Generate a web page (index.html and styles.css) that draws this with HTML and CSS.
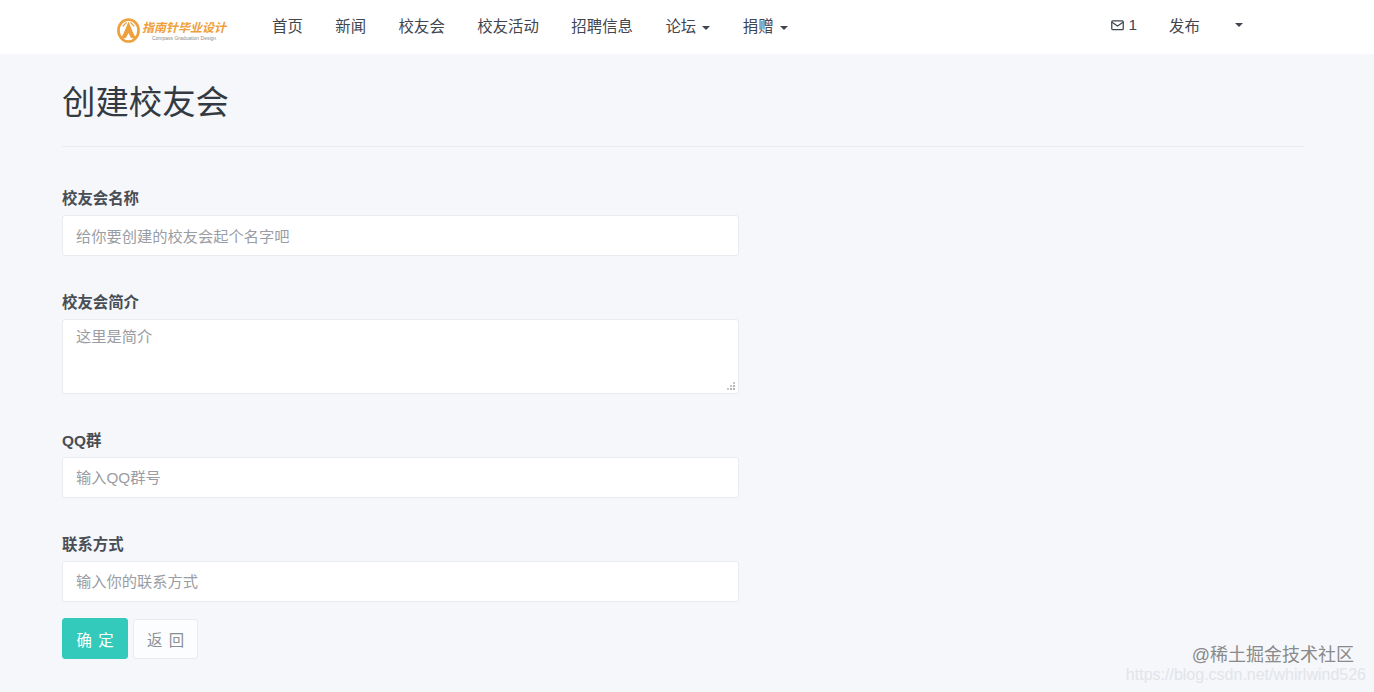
FILE: index.html
```html
<!DOCTYPE html>
<html lang="zh-CN">
<head>
    <meta charset="UTF-8">
    <meta name="viewport" content="width=device-width, initial-scale=1.0">
    <title>创建校友会</title>
    <link rel="stylesheet" href="styles.css">
</head>
<body>
    <div class="navbar">
        <a class="logo" href="#">
            <svg class="logo-mark" viewBox="0 0 24 27" width="23" height="27">
                <ellipse cx="12" cy="13.5" rx="10.5" ry="11.5" fill="none" stroke="#eea03c" stroke-width="2.8"/>
                <path d="M12 4 L16 14 L20 22 L14.5 21 L12 16 L9.5 21 L4 22 L8 14 Z" fill="#eea03c"/>
                <path d="M6 9 L10 5 M18 9 L14 5" fill="none" stroke="#eea03c" stroke-width="1.4"/>
            </svg>
            <span class="logo-text">
                <span class="logo-name">指南针毕业设计</span>
                <span class="logo-sub">Compass Graduation Design</span>
            </span>
        </a>
        <ul class="nav">
            <li><a href="#">首页</a></li>
            <li><a href="#">新闻</a></li>
            <li><a href="#">校友会</a></li>
            <li><a href="#">校友活动</a></li>
            <li><a href="#">招聘信息</a></li>
            <li><a href="#">论坛<span class="caret"></span></a></li>
            <li><a href="#">捐赠<span class="caret"></span></a></li>
        </ul>
        <div class="nav-right">
            <a class="msg" href="#">
                <svg viewBox="0 0 14 12" width="13" height="11">
                    <rect x="0.75" y="1" width="12.5" height="9.5" rx="1" fill="none" stroke="#3f4650" stroke-width="1.4"/>
                    <path d="M1 2.5 L7 6.5 L13 2.5" fill="none" stroke="#3f4650" stroke-width="1.3"/>
                </svg>
                1
            </a>
            <a class="publish" href="#">发布</a>
            <span class="caret user-caret"></span>
        </div>
    </div>

    <div class="container">
        <h1 class="page-title">创建校友会</h1>

        <form class="form">
            <div class="form-group">
                <label>校友会名称</label>
                <input class="form-control" type="text" placeholder="给你要创建的校友会起个名字吧">
            </div>
            <div class="form-group">
                <label>校友会简介</label>
                <div class="area-wrap">
                    <textarea class="form-control text-area" placeholder="这里是简介"></textarea>
                </div>
            </div>
            <div class="form-group">
                <label>QQ群</label>
                <input class="form-control" type="text" placeholder="输入QQ群号">
            </div>
            <div class="form-group last">
                <label>联系方式</label>
                <input class="form-control" type="text" placeholder="输入你的联系方式">
            </div>
            <div class="actions">
                <button class="btn btn-primary" type="button">确 定</button>
                <button class="btn btn-default" type="button">返 回</button>
            </div>
        </form>
    </div>

    <div class="watermark">
        <div class="wm-juejin">@稀土掘金技术社区</div>
        <div class="wm-csdn">https://blog.csdn.net/whirlwind526</div>
    </div>
</body>
</html>
```

FILE: styles.css
```css
* {
    box-sizing: border-box;
}

html, body {
    height: 100%;
}

body {
    margin: 0;
    background-color: #f5f7fb;
    color: #3f4650;
    font-family: "Liberation Sans", "Noto Sans CJK SC", sans-serif;
    font-size: 15.4px;
    overflow: hidden;
}

a {
    color: inherit;
    text-decoration: none;
}

/* navbar */
.navbar {
    display: flex;
    align-items: center;
    height: 54px;
    padding-left: 117px;
    background-color: #fff;
}

.logo {
    display: flex;
    align-items: center;
    gap: 2px;
    width: 155px;
    padding-top: 7px;
}

.logo-text {
    display: flex;
    flex-direction: column;
    align-items: center;
}

.logo-name {
    color: #eea03c;
    font-size: 12px;
    line-height: 14px;
    font-weight: 700;
    font-style: italic;
}

.logo-sub {
    color: #8d8d8d;
    font-size: 5px;
    line-height: 6px;
}

.nav {
    display: flex;
    gap: 32.5px;
    margin: 0 0 4px;
    padding: 0;
    list-style: none;
}

.caret {
    display: inline-block;
    margin-left: 6px;
    vertical-align: middle;
    border-top: 4px solid #3f4650;
    border-left: 4px solid transparent;
    border-right: 4px solid transparent;
}

.nav-right {
    display: flex;
    align-items: center;
    margin: 0 0 4px 323px;
}

.msg {
    display: flex;
    align-items: center;
    gap: 5px;
}

.publish {
    margin-left: 32px;
}

.user-caret {
    margin-left: 35px;
}

/* content */
.container {
    padding: 0 70px 0 62px;
}

.page-title {
    margin: 0;
    height: 93px;
    padding-top: 25px;
    border-bottom: 1px solid #e9ecf1;
    font-size: 33.4px;
    line-height: 48px;
    font-weight: 400;
    color: #343a42;
}

.form {
    width: 677px;
    padding-top: 44px;
}

.form-group {
    margin-bottom: 39px;
}

.form-group.last {
    margin-bottom: 16px;
}

.form-group label {
    display: block;
    height: 16px;
    margin-bottom: 8px;
    line-height: 16px;
    font-weight: 700;
    color: #494e55;
}

.form-control {
    display: block;
    width: 100%;
    height: 41px;
    padding: 0 13px;
    background-color: #fff;
    border: 1px solid #e8ebf0;
    border-radius: 3px;
    outline: none;
    color: #3f4650;
    font-family: inherit;
    font-size: 15.25px;
}

.form-group:first-child .form-control {
    padding-top: 1px;
}

.form-control::placeholder {
    color: #9a9da3;
    opacity: 1;
}

.area-wrap {
    position: relative;
}

.text-area {
    height: 75px;
    padding: 7px 13px;
    line-height: 20px;
    resize: none;
}

/* dotted resize grip, lower right corner of the textarea */
.area-wrap::after {
    content: "";
    position: absolute;
    right: 4px;
    bottom: 4px;
    width: 2px;
    height: 2px;
    background-color: #b4b4b4;
    box-shadow: -3px 0 #b4b4b4, -6px 0 #c8c8c8, 0 -3px #b4b4b4, -3px -3px #c8c8c8, 0 -6px #c8c8c8;
}

.actions {
    display: flex;
    align-items: center;
    gap: 5px;
}

.btn {
    border-radius: 3px;
    font-family: inherit;
    font-size: 15.4px;
    word-spacing: 2px;
}

.btn-primary {
    width: 66px;
    height: 41px;
    background-color: #33cabb;
    border: 1px solid #33cabb;
    color: #fff;
}

.btn-default {
    width: 65px;
    height: 40px;
    background-color: #fcfdfe;
    border: 1px solid #e8ebf0;
    color: #8b9096;
}

/* watermark over the corner of the screenshot */
.watermark {
    position: absolute;
    right: 8px;
    bottom: 8px;
    text-align: right;
}

.wm-juejin {
    margin-right: 12px;
    color: #8a8a8a;
    font-size: 18px;
    line-height: 22px;
}

.wm-csdn {
    color: #e2e4e8;
    font-size: 16px;
    line-height: 18px;
}
```
